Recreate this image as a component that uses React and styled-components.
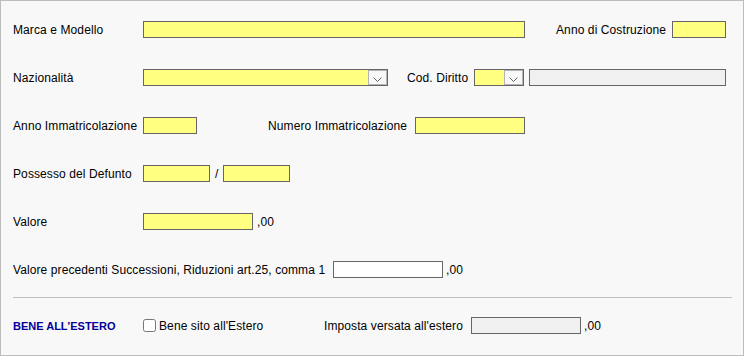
import React from "react";
import styled, { createGlobalStyle } from "styled-components";

const Global = createGlobalStyle`
  html, body { margin: 0; padding: 0; background: #ffffff; }
  body { font-family: "Liberation Sans", Arial, sans-serif; font-size: 12px; color: #000; }
`;

const Panel = styled.div`
  box-sizing: border-box;
  width: 744px;
  height: 356px;
  border: 1px solid #bdbdbd;
  background: #f8f8f8;
  padding: 20px 12px 0 12px;
  display: flex;
  flex-direction: column;
`;

const Row = styled.div`
  display: flex;
  align-items: center;
  height: 17px;
  margin-bottom: ${(p) => p.$mb ?? 31}px;
`;

const Text = styled.span`
  box-sizing: border-box;
  flex: none;
  white-space: nowrap;
  letter-spacing: 0.1px;
  width: ${(p) => (p.$w ? `${p.$w}px` : "auto")};
  margin-left: ${(p) => p.$ml ?? 0}px;
`;

const Field = styled.div`
  box-sizing: border-box;
  flex: none;
  width: ${(p) => p.$w}px;
  height: 17px;
  border: 1px solid #666666;
  margin-left: ${(p) => p.$ml ?? 0}px;
  background: ${(p) =>
    p.$tone === "gray" ? "#f0f0f0" : p.$tone === "white" ? "#ffffff" : "#ffff80"};
`;

const Select = styled(Field)`
  display: flex;
  justify-content: flex-end;
`;

const DropButton = styled.span`
  box-sizing: border-box;
  width: 19px;
  height: 100%;
  border: 1px solid #b4b4b4;
  background: #f8f8f8;
  display: flex;
  align-items: flex-end;
  justify-content: center;
  padding-bottom: 2px;
`;

const Separator = styled.hr`
  border: none;
  border-top: 1px solid #c0c0c0;
  margin: 0 0 19px 0;
  width: 719px;
  height: 0;
`;

const Section = styled.span`
  width: 130px;
  flex: none;
  font-size: 11px;
  font-weight: bold;
  color: #000099;
  white-space: nowrap;
`;

const Check = styled.input`
  width: 13px;
  height: 13px;
  margin: 0 3px 0 0;
  flex: none;
`;

const Chevron = () => (
  <svg width="9" height="5" viewBox="0 0 9 5">
    <polyline points="0.5,0.5 4.5,4.5 8.5,0.5" fill="none" stroke="#666" strokeWidth="1" />
  </svg>
);

export default function App() {
  return (
    <>
      <Global />
      <Panel>
        <Row>
          <Text $w={130}>Marca e Modello</Text>
          <Field $w={382} />
          <Text $ml={31} $w={116}>Anno di Costruzione</Text>
          <Field $w={54} />
        </Row>
        <Row>
          <Text $w={130}>Nazionalità</Text>
          <Select $w={245}>
            <DropButton>
              <Chevron />
            </DropButton>
          </Select>
          <Text $ml={19} $w={67}>Cod. Diritto</Text>
          <Select $w={50}>
            <DropButton>
              <Chevron />
            </DropButton>
          </Select>
          <Field $w={197} $ml={5} $tone="gray" />
        </Row>
        <Row>
          <Text $w={130}>Anno Immatricolazione</Text>
          <Field $w={54} />
          <Text $ml={71} $w={147}>Numero Immatricolazione</Text>
          <Field $w={110} />
        </Row>
        <Row>
          <Text $w={130}>Possesso del Defunto</Text>
          <Field $w={67} />
          <Text $ml={5} $w={8}>/</Text>
          <Field $w={67} />
        </Row>
        <Row>
          <Text $w={130}>Valore</Text>
          <Field $w={110} />
          <Text $ml={4}>,00</Text>
        </Row>
        <Row $mb={19}>
          <Text $w={320}>Valore precedenti Successioni, Riduzioni art.25, comma 1</Text>
          <Field $w={110} $tone="white" />
          <Text $ml={3}>,00</Text>
        </Row>
        <Separator />
        <Row>
          <Section>BENE ALL'ESTERO</Section>
          <Check type="checkbox" />
          <Text $w={165}>Bene sito all'Estero</Text>
          <Text $w={147}>Imposta versata all'estero</Text>
          <Field $w={110} $tone="gray" />
          <Text $ml={3}>,00</Text>
        </Row>
      </Panel>
    </>
  );
}
